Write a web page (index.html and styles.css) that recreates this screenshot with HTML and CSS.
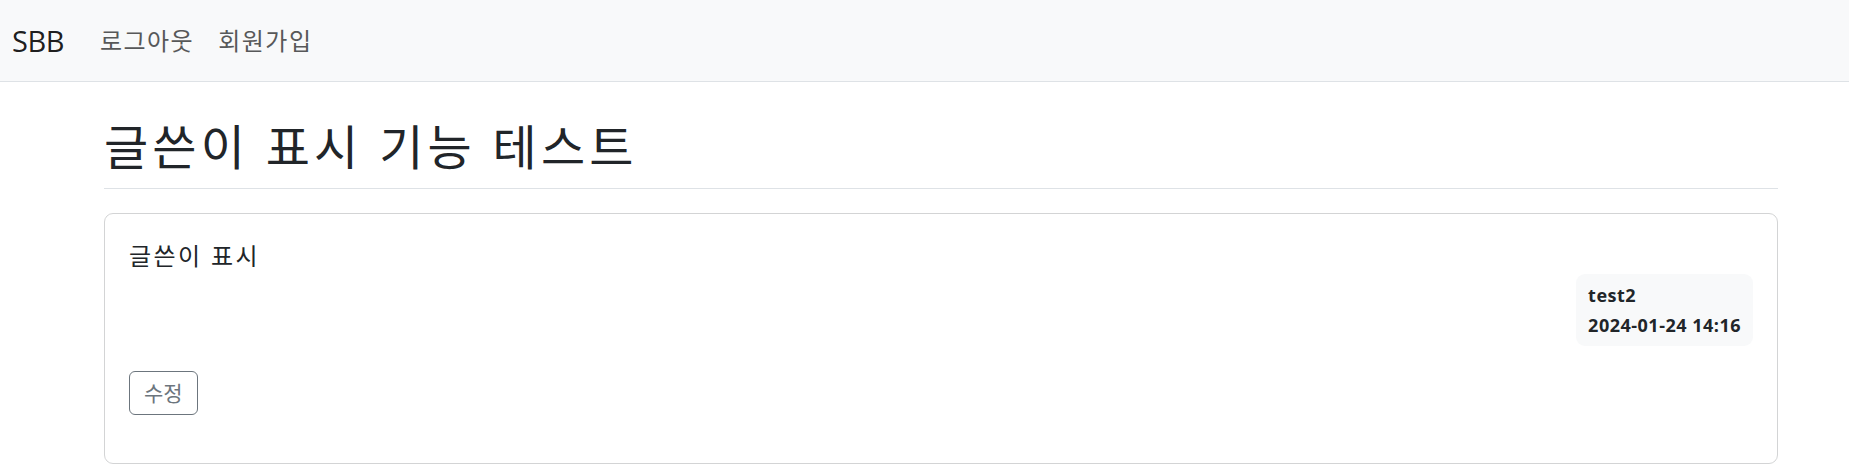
FILE: index.html
```html
<!DOCTYPE html>
<html lang="ko">
<head>
<meta charset="utf-8">
<title>SBB</title>
<link rel="stylesheet" href="styles.css">
</head>
<body>
<nav class="navbar">
  <a class="brand" href="#">SBB</a>
  <ul class="nav">
    <li><a class="nav-link" href="#">로그아웃</a></li>
    <li><a class="nav-link" href="#">회원가입</a></li>
  </ul>
</nav>
<div class="container">
  <h2 class="title">글쓴이 표시 기능 테스트</h2>
  <div class="card">
    <div class="card-body">
      <div class="card-text">글쓴이 표시</div>
      <div class="meta-row">
        <div class="badge">
          <div class="author">test2</div>
          <div>2024-01-24 14:16</div>
        </div>
      </div>
      <div class="actions"><a class="btn" href="#">수정</a></div>
    </div>
  </div>
</div>
</body>
</html>
```
FILE: styles.css
```css
body {
  margin: 0;
  font-family: "Open Sans", "Noto Sans CJK KR", sans-serif;
  color: #212529;
  background: #fff;
}

.navbar {
  display: flex;
  align-items: center;
  height: 81px;
  padding: 0 12px;
  background: #f8f9fa;
  border-bottom: 1px solid #dee2e6;
}

.brand {
  font-size: 29px;
  letter-spacing: -0.5px;
  line-height: 45px;
  margin-right: 24px;
  color: rgba(0, 0, 0, 0.9);
  text-decoration: none;
}

.nav {
  display: flex;
  list-style: none;
  margin: 0;
  padding: 0;
}

.nav-link {
  display: block;
  padding: 0 12px;
  font-size: 24px;
  letter-spacing: 1.5px;
  line-height: 36px;
  color: #575859;
  text-decoration: none;
}

.container {
  width: 1674px;
  margin: 24px 0 0 104px;
}

.title {
  font-size: 48px;
  font-weight: 400;
  letter-spacing: 4.2px;
  line-height: 1.2;
  margin: 0 0 24px;
  padding: 12px 0;
  border-bottom: 1px solid #dee2e6;
}

.card {
  border: 1px solid #d3d4d5;
  border-radius: 9px;
}

.card-body {
  padding: 24px;
}

.card-text {
  font-size: 24px;
  letter-spacing: 2.4px;
  line-height: 36px;
}

.meta-row {
  display: flex;
  justify-content: flex-end;
}

.badge {
  background: #f8f9fa;
  padding: 12px;
  border-radius: 9px;
  font-size: 18px;
  font-weight: 700;
  letter-spacing: 0.5px;
  line-height: 1;
  color: #212529;
}

.author {
  margin-bottom: 12px;
}

.actions {
  display: flex;
  align-items: flex-start;
  padding-top: 1px;
  margin: 24px 0;
}

.btn {
  display: block;
  font-size: 21px;
  line-height: 31px;
  padding: 6px 14px 5px;
  border: 1px solid #6c757d;
  border-radius: 6px;
  color: #6c757d;
  text-decoration: none;
}
```
